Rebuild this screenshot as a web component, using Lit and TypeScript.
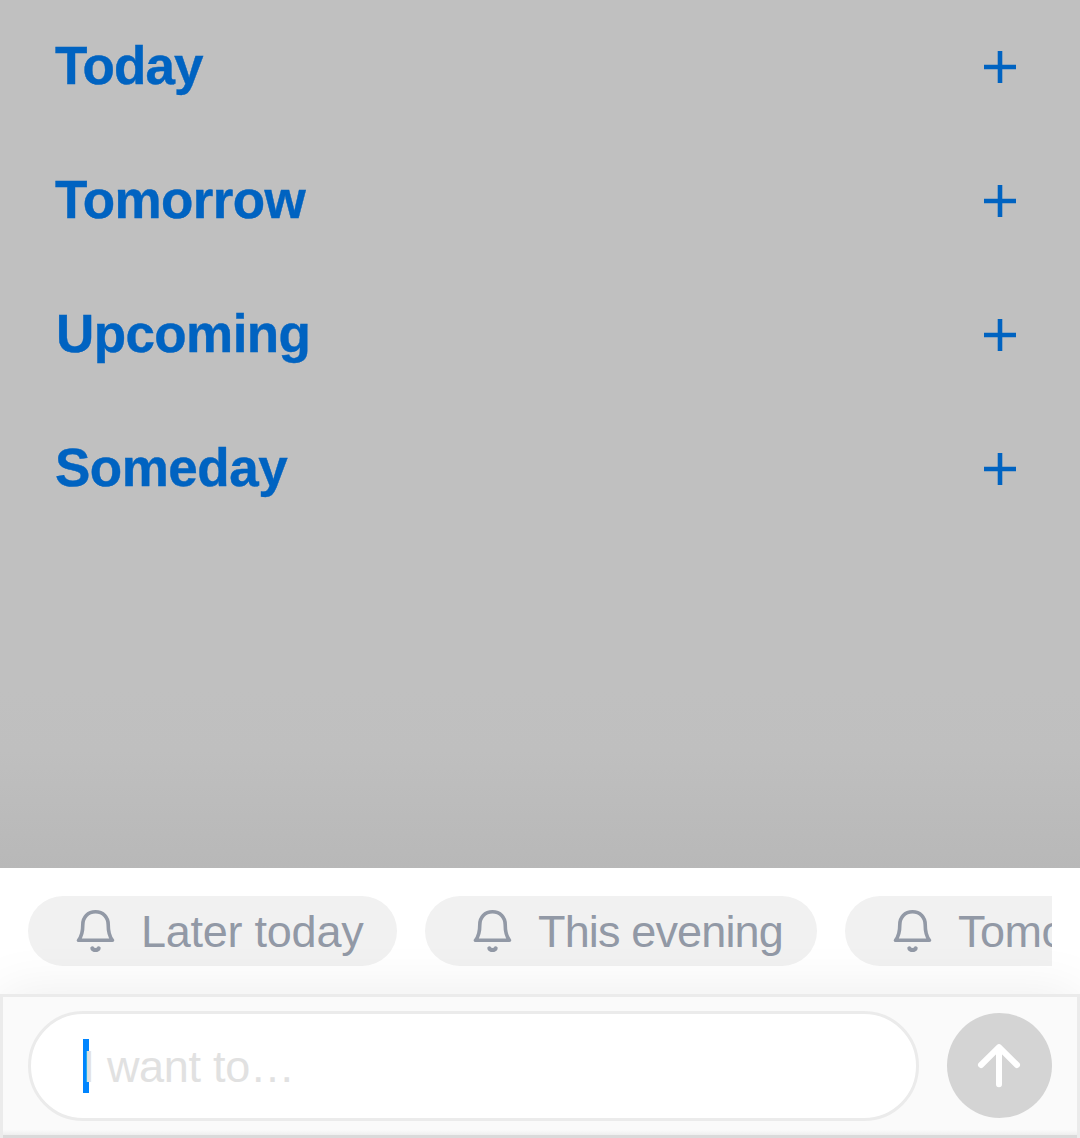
import { LitElement, html, css } from "lit";
import { customElement } from "lit/decorators.js";

interface Label {
  text: string;
  cls: string;
}

const SECTIONS: Label[] = [
  { text: "Today", cls: "today" },
  { text: "Tomorrow", cls: "tomorrow" },
  { text: "Upcoming", cls: "upcoming" },
  { text: "Someday", cls: "someday" },
];

const REMINDERS: Label[] = [
  { text: "Later today", cls: "later" },
  { text: "This evening", cls: "evening" },
  { text: "Tomorrow", cls: "next" },
];

@customElement("app-root")
export class AppRoot extends LitElement {
  static styles = css`
    :host {
      display: flex;
      flex-direction: column;
      height: 1138px;
      width: 1080px;
      overflow: hidden;
      font-family: "Liberation Sans", Arial, Helvetica, sans-serif;
      background: #fff;
    }
    .sections {
      box-sizing: border-box;
      height: 868px;
      background: linear-gradient(#c0c0c0 690px, #bfbfbf 750px, #b8b8b8 868px);
    }
    .section {
      box-sizing: border-box;
      height: 134px;
      padding: 0 64px 0 55px;
      display: flex;
      align-items: center;
      justify-content: space-between;
      color: #0063c1;
    }
    .title {
      margin: 0;
      padding-bottom: 2px;
      font-size: 53px;
      line-height: 60px;
      font-weight: 700;
      -webkit-text-stroke: 0.4px currentColor;
      white-space: nowrap;
    }
    .today { letter-spacing: -0.9px; }
    .tomorrow { letter-spacing: -0.65px; }
    .upcoming { letter-spacing: -0.6px; padding-left: 1px; }
    .someday { letter-spacing: -0.5px; }
    .plus {
      display: block;
      width: 32px;
      height: 32px;
    }
    .reminders {
      box-sizing: border-box;
      height: 126px;
      padding: 28px;
      background: #fff;
    }
    .track {
      display: flex;
      gap: 28px;
      overflow: hidden;
    }
    .chip {
      box-sizing: border-box;
      flex: none;
      height: 70px;
      border-radius: 35px;
      background: #f1f1f1;
      color: #9299a6;
      padding-left: 44px;
      display: flex;
      align-items: center;
      gap: 21px;
      font-size: 45px;
      line-height: 52px;
      letter-spacing: -0.5px;
      white-space: nowrap;
    }
    .chip-text { padding-top: 2px; }
    .chip.later { width: 369px; letter-spacing: -0.25px; }
    .chip.evening { width: 392px; letter-spacing: -0.85px; }
    .chip.next { width: 372px; }
    .bell {
      flex: none;
      display: block;
      width: 48px;
      height: 48px;
    }
    .composer {
      position: relative;
      box-sizing: border-box;
      height: 144px;
      border: 3px solid #ebebeb;
      border-bottom: 0;
      padding: 14px 25px;
      display: flex;
      gap: 28px;
      background: linear-gradient(#fafafa 133px, #eeeeee 138px, #dadada 138px);
      box-shadow: 0 0 56px rgba(0, 0, 0, 0.08);
    }
    .field {
      box-sizing: border-box;
      width: 891px;
      height: 110px;
      border: 3px solid #ebebeb;
      border-radius: 55px;
      background: #fff;
      padding-left: 52px;
      display: flex;
      align-items: center;
    }
    .caret {
      width: 6px;
      height: 54px;
      margin-right: -6px;
      background: #0085ff;
    }
    .placeholder {
      position: relative;
      margin-left: -0.5px;
      padding-top: 2px;
      font-size: 45px;
      line-height: 52px;
      letter-spacing: -0.3px;
      color: #e1e1e1;
      white-space: nowrap;
    }
    .send {
      margin: 2px 0 0;
      padding: 0;
      border: 0;
      width: 105px;
      height: 105px;
      border-radius: 50%;
      background: #d4d4d4;
      display: flex;
      align-items: center;
      justify-content: center;
    }
    .arrow {
      display: block;
      width: 105px;
      height: 105px;
    }
  `;

  render() {
    return html`
      <main class="sections">
        ${SECTIONS.map(
          (s) => html`<section class="section">
            <h2 class="title ${s.cls}">${s.text}</h2>
            <svg class="plus" viewBox="0 0 32 32" stroke="currentColor" stroke-width="4.6">
              <path d="M16 0V32M0 16H32" />
            </svg>
          </section>`
        )}
      </main>
      <div class="reminders">
        <div class="track">
          ${REMINDERS.map(
            (r) => html`<div class="chip ${r.cls}">
              <svg
                class="bell"
                viewBox="0 0 48 48"
                fill="none"
                stroke="currentColor"
                stroke-width="3.6"
                stroke-linecap="round"
                stroke-linejoin="round"
              >
                <path
                  d="M23.5 4.8C15.8 4.8 10.8 10.3 10.8 17.5C10.8 25 9.3 30 6.5 33.3H40.5C37.7 30 36.2 25 36.2 17.5C36.2 10.3 31.2 4.8 23.5 4.8Z"
                />
                <path stroke-width="4" d="M20.3 41.4C21.3 43.6 25.7 43.6 26.7 41.4" />
              </svg>
              <span class="chip-text">${r.text}</span>
            </div>`
          )}
        </div>
      </div>
      <div class="composer">
        <div class="field">
          <span class="caret"></span>
          <span class="placeholder">I want to…</span>
        </div>
        <button class="send" aria-label="Send">
          <svg
            class="arrow"
            viewBox="0 0 105 105"
            fill="none"
            stroke="#fff"
            stroke-width="6"
            stroke-linecap="round"
            stroke-linejoin="round"
          >
            <path d="M52 71.3V34.2M34 52L52 34.2L70 52" />
          </svg>
        </button>
      </div>
    `;
  }
}
